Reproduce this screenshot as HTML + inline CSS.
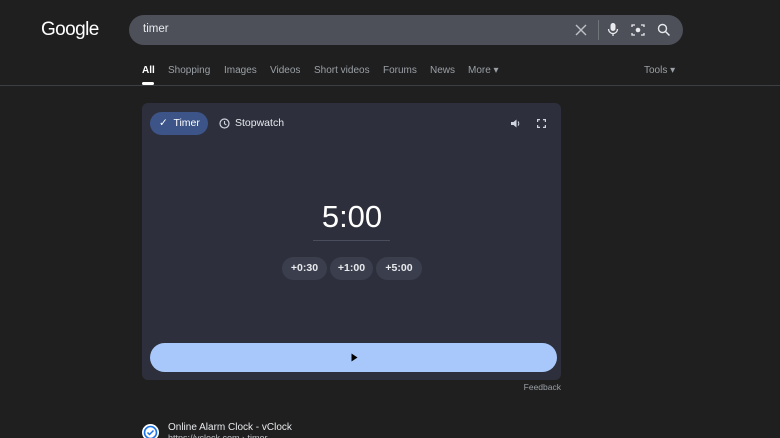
<!DOCTYPE html><html style="height:438px;overflow:hidden"><head><style>
body{margin:0;width:780px;height:438px;background:#1f1f1f;font-family:"Liberation Sans",Arial,sans-serif;color:#e8eaed;overflow:hidden;position:relative}
.a{position:absolute}
.tab{position:absolute;top:65px;font-size:10px;color:#9aa0a6}
.btn{position:absolute;top:257px;height:23px;border-radius:12px;background:#3b3f4d;font-size:10.5px;font-weight:bold;color:#e8eaed;text-align:center;line-height:23px}
</style></head><body>
<div class="a" style="left:41px;top:19px;font-size:19px;color:#fff;letter-spacing:-0.6px">Google</div>
<div class="a" style="left:129px;top:15px;width:554px;height:30px;border-radius:15px;background:#4d5059"></div>
<div class="a" style="left:143px;top:23px;font-size:11.5px;color:#e8eaed">timer</div>
<svg class="a" style="left:575px;top:24px" width="12" height="12"><path d="M1 1L11 11M11 1L1 11" stroke="#bdc1c6" stroke-width="1.4"/></svg>
<div class="a" style="left:598px;top:20px;width:1px;height:20px;background:#70757a"></div>
<svg class="a" style="left:607px;top:22px" width="12" height="16"><rect x="3.5" y="1" width="5" height="8" rx="2.5" fill="#e8eaed"/><path d="M1.5 7a4.5 4.5 0 0 0 9 0M6 11.5V14" stroke="#e8eaed" stroke-width="1.3" fill="none"/></svg>
<svg class="a" style="left:631px;top:23px" width="14" height="14"><path d="M1 4V2h3M10 2h3v2M13 10v2h-3M4 12H1v-2" stroke="#e8eaed" stroke-width="1.3" fill="none"/><circle cx="7" cy="7" r="2.3" fill="#e8eaed"/></svg>
<svg class="a" style="left:657px;top:23px" width="14" height="14"><circle cx="5.5" cy="5.5" r="4" stroke="#e8eaed" stroke-width="1.4" fill="none"/><path d="M8.5 8.5L12.5 12.5" stroke="#e8eaed" stroke-width="1.5"/></svg>
<div class="tab" style="left:142px;color:#fff;font-weight:bold">All</div>
<div class="a" style="left:142px;top:82px;width:12px;height:3px;background:#fff;border-radius:2px"></div>
<div class="tab" style="left:168px">Shopping</div>
<div class="tab" style="left:224px">Images</div>
<div class="tab" style="left:270px">Videos</div>
<div class="tab" style="left:314px">Short videos</div>
<div class="tab" style="left:383px">Forums</div>
<div class="tab" style="left:430px">News</div>
<div class="tab" style="left:468px">More ▾</div>
<div class="tab" style="left:644px">Tools ▾</div>
<div class="a" style="left:0;top:85px;width:780px;height:1px;background:#3c4043"></div>
<div class="a" style="left:142px;top:103px;width:419px;height:277px;border-radius:6px;background:#2d303c"></div>
<div class="a" style="left:150px;top:112px;width:58px;height:23px;border-radius:12px;background:#3c5488"></div>
<div class="a" style="left:159px;top:117px;font-size:10.5px;color:#fff">✓&nbsp; Timer</div>
<svg class="a" style="left:219px;top:118px" width="11" height="11"><circle cx="5.5" cy="5.5" r="4.5" stroke="#d0d4e0" stroke-width="1.2" fill="none"/><path d="M5.5 3v2.7l1.8 1.2" stroke="#d0d4e0" stroke-width="1.1" fill="none"/></svg>
<div class="a" style="left:235px;top:117px;font-size:10.5px;color:#e8eaed">Stopwatch</div>
<svg class="a" style="left:510px;top:118px" width="11" height="11"><path d="M1 4h2.5L6.5 1.5v8L3.5 7H1z" fill="#d0d4e0"/><path d="M8 3.5a3 3 0 0 1 0 4" stroke="#d0d4e0" stroke-width="1.1" fill="none"/></svg>
<svg class="a" style="left:537px;top:119px" width="9" height="9"><path d="M0.6 3V0.6H3M6 0.6h2.4V3M8.4 6v2.4H6M3 8.4H0.6V6" stroke="#d0d4e0" stroke-width="1.2" fill="none"/></svg>
<div class="a" style="left:302px;top:199px;width:100px;text-align:center;font-size:31px;color:#fff">5:00</div>
<div class="a" style="left:313px;top:240px;width:77px;height:1px;background:#4a4e5c"></div>
<div class="btn" style="left:282px;width:45px">+0:30</div>
<div class="btn" style="left:330px;width:43px">+1:00</div>
<div class="btn" style="left:376px;width:46px">+5:00</div>
<div class="a" style="left:150px;top:343px;width:407px;height:29px;border-radius:15px;background:#a8c7fa"></div>
<svg class="a" style="left:351px;top:353px" width="7" height="9"><path d="M0.5 0.5L6.5 4.5L0.5 8.5z" fill="#000"/></svg>
<div class="a" style="left:500px;top:382px;width:61px;text-align:right;font-size:8.5px;color:#9aa0a6">Feedback</div>
<div class="a" style="left:142px;top:424px;width:17px;height:17px;border-radius:50%;background:#fff"></div>
<svg class="a" style="left:143px;top:425px" width="15" height="15"><circle cx="7.5" cy="7.5" r="6" stroke="#1a73e8" stroke-width="1.6" fill="none"/><path d="M4.5 7.5l2 2 4-4" stroke="#1a73e8" stroke-width="1.5" fill="none"/></svg>
<div class="a" style="left:168px;top:422px;font-size:10px;color:#e8eaed">Online Alarm Clock - vClock</div>
<div class="a" style="left:168px;top:433px;font-size:9px;color:#bdc1c6">https://vclock.com › timer</div>
</body></html>
